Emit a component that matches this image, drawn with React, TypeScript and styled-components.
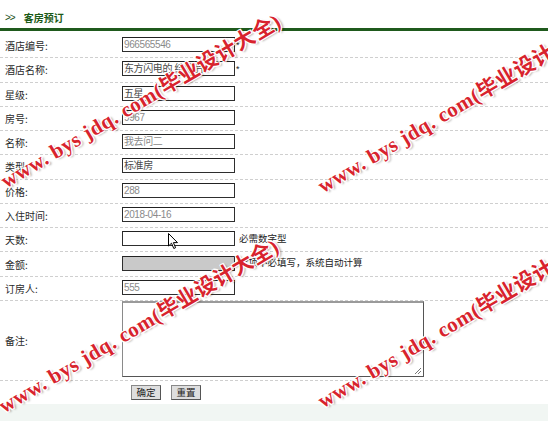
import React from "react";
import styled, { createGlobalStyle } from "styled-components";

const GlobalStyle = createGlobalStyle`
  html, body { margin: 0; padding: 0; background: #ffffff; }
  body { font-family: "Liberation Sans", "Noto Sans CJK SC", sans-serif; }
`;

const Page = styled.div`
  position: relative;
  width: 548px;
  height: 421px;
  overflow: hidden;
  background: #ffffff;
  font-size: 10px;
  color: #333;
`;

const Header = styled.div`
  height: 31px;
  box-sizing: border-box;
  padding: 6px 0 0 5px;
  display: flex;
  align-items: center;
  gap: 9px;
  border-bottom: 3px solid #1f5a1d;
  color: #1b5a17;
  font-weight: bold;
  font-size: 10px;
`;

const Arrows = styled.span`
  font-family: "Liberation Sans", sans-serif;
  font-size: 10px;
  font-weight: normal;
  color: #1b4f17;
  letter-spacing: -1px;
`;

const Title = styled.span`
  font-family: "Noto Sans CJK SC", sans-serif;
  font-weight: 700;
`;

const Form = styled.div`
  padding-top: 3px;
  display: flex;
  flex-direction: column;
`;

const Row = styled.div<{ $h?: number }>`
  display: grid;
  grid-template-columns: 122px 1fr;
  align-items: center;
  box-sizing: border-box;
  height: ${(p) => p.$h ?? 24.27}px;
  border-bottom: 1px dashed #cfcfcf;
`;

const Label = styled.div`
  padding-left: 5px;
  font-family: "Noto Sans CJK SC", sans-serif;
  font-size: 10px;
  line-height: 1;
  color: #2a2a2a;
  padding-top: 1px;
`;

const Field = styled.div`
  display: flex;
  align-items: center;
  gap: 4px;
  margin-bottom: 2px;
`;

const Input = styled.div<{ $tone?: "gray" | "dark"; $fill?: boolean }>`
  width: 113px;
  height: 15px;
  box-sizing: border-box;
  border: 1px solid #2e2e2e;
  border-top-color: #222;
  background: ${(p) => (p.$fill ? "#c9c9c9" : "#ffffff")};
  color: ${(p) => (p.$tone === "dark" ? "#4a4a4a" : "#8a8a8a")};
  font-family: "Liberation Sans", "Noto Sans CJK SC", sans-serif;
  font-size: 10px;
  letter-spacing: -0.4px;
  line-height: 13px;
  padding: 0 1px;
  white-space: nowrap;
  overflow: hidden;
`;

const Star = styled.span`
  font-size: 9px;
  color: #222;
  margin-left: -3px;
`;

const Note = styled.span`
  font-family: "Noto Sans CJK SC", sans-serif;
  font-size: 9.5px;
  color: #222;
  line-height: 1;
`;

const TextArea = styled.div`
  position: relative;
  width: 302px;
  height: 76px;
  box-sizing: border-box;
  border: 1px solid #555;
  border-top: 2px solid #9a9a9a;
  border-left-color: #8a8a8a;
  background: #fff;
`;

const Grip = styled.svg`
  position: absolute;
  right: 1px;
  bottom: 1px;
`;

const ButtonRow = styled.div`
  height: 23px;
  display: flex;
  align-items: center;
  gap: 10px;
  padding-left: 131px;
`;

const Button = styled.button`
  width: 30px;
  height: 15px;
  padding: 0;
  box-sizing: border-box;
  background: #dedede;
  border: 1px solid #555;
  border-top-color: #888;
  border-left-color: #888;
  font-family: "Noto Sans CJK SC", sans-serif;
  font-size: 9.5px;
  line-height: 1;
  color: #222;
`;

const Footer = styled.div`
  height: 17px;
  background: #f1f6f3;
`;

const Watermark = styled.div<{ $x: number; $y: number }>`
  position: absolute;
  left: ${(p) => p.$x}px;
  bottom: ${(p) => 421 - p.$y}px;
  transform-origin: 0 100%;
  transform: rotate(-30.5deg);
  white-space: nowrap;
  font-family: "Liberation Serif", "Noto Sans CJK SC", serif;
  font-weight: bold;
  font-size: 21px;
  line-height: 1;
  letter-spacing: 0.5px;
  color: #d8232d;
  text-shadow: 1px 1px 0 #fff, -1px -1px 0 #fff, 1px -1px 0 #fff, -1px 1px 0 #fff,
    2px 2px 2px rgba(0, 0, 0, 0.3);
  pointer-events: none;
`;

const Cursor = styled.svg`
  position: absolute;
  left: 168px;
  top: 233px;
`;

type Item = {
  label: string;
  value?: string;
  tone?: "gray" | "dark";
  star?: boolean;
  fill?: boolean;
  note?: string;
};

const items: Item[] = [
  { label: "酒店编号:", value: "966565546", star: true },
  { label: "酒店名称:", value: "东方闪电的 结婚后", tone: "dark", star: true },
  { label: "星级:", value: "五星", tone: "dark" },
  { label: "房号:", value: "9967" },
  { label: "名称:", value: "我去问二" },
  { label: "类型:", value: "标准房", tone: "dark" },
  { label: "价格:", value: "288" },
  { label: "入住时间:", value: "2018-04-16" },
  { label: "天数:", value: "", note: "必需数字型" },
  { label: "金额:", value: "", fill: true, note: "此项不必填写，系统自动计算" },
  { label: "订房人:", value: "555" },
];

const WM = "www. bys jdq. com(毕业设计大全)";

export default function App() {
  return (
    <>
      <GlobalStyle />
      <Page>
        <Header>
          <Arrows>&gt;&gt;</Arrows>
          <Title>客房预订</Title>
        </Header>
        <Form>
          {items.map((it) => (
            <Row key={it.label}>
              <Label>{it.label}</Label>
              <Field>
                <Input $tone={it.tone} $fill={it.fill}>
                  {it.value}
                </Input>
                {it.star && <Star>*</Star>}
                {it.note && <Note>{it.note}</Note>}
              </Field>
            </Row>
          ))}
          <Row $h={80}>
            <Label>备注:</Label>
            <Field>
              <TextArea>
                <Grip width="8" height="8" viewBox="0 0 8 8">
                  <path d="M7 1 L1 7 M7 4 L4 7" stroke="#777" strokeWidth="1" />
                </Grip>
              </TextArea>
            </Field>
          </Row>
          <ButtonRow>
            <Button>确定</Button>
            <Button>重置</Button>
          </ButtonRow>
          <Footer />
        </Form>
        <Cursor width="11" height="17" viewBox="0 0 11 17">
          <path
            d="M0.5 0.5 L0.5 13 L3.5 10.2 L5.8 15.5 L7.6 14.7 L5.4 9.6 L9.5 9.6 Z"
            fill="#fff"
            stroke="#000"
            strokeWidth="1"
            strokeLinejoin="round"
          />
        </Cursor>
        <Watermark $x={8} $y={192}>{WM}</Watermark>
        <Watermark $x={325} $y={197}>{WM}</Watermark>
        <Watermark $x={6} $y={417}>{WM}</Watermark>
        <Watermark $x={325} $y={412}>{WM}</Watermark>
      </Page>
    </>
  );
}
